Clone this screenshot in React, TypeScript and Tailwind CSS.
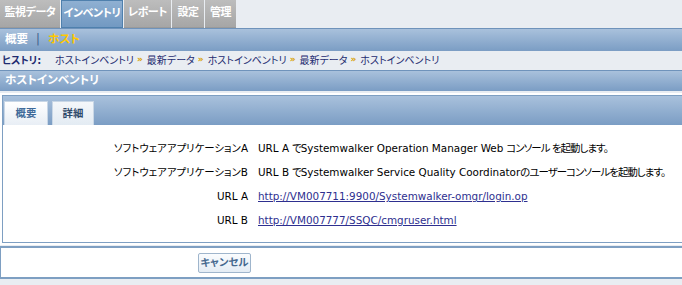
import React from "react";

const jp = "[font-family:'DejaVu_Sans','Noto_Sans_CJK_JP',sans-serif] [font-feature-settings:'palt']";

function Sep() {
  return <span className="ml-[3px] mr-[4px] text-[9px] font-bold text-[#d8a000]">»</span>;
}

function J({ children, gap }: { children: React.ReactNode; gap?: boolean }) {
  return <span className={gap ? "ml-[3px] tracking-[-0.9px]" : "tracking-[-0.9px]"}>{children}</span>;
}

export default function App() {
  const topTabs: [string, number][] = [
    ["監視データ", 60],
    ["インベントリ", 62],
    ["レポート", 47],
    ["設定", 32],
    ["管理", 31],
  ];
  return (
    <div className={`w-[682px] h-[285px] overflow-hidden bg-[#e9edf2] text-[10.4px] ${jp}`}>
      {/* top tabs */}
      <div className="flex h-[28px] items-stretch">
        {topTabs.map(([t, w], i) =>
          i === 1 ? (
            <div
              key={t}
              style={{ width: w }}
              className="flex items-center justify-center mr-[1px] border border-[#4f80ad] bg-gradient-to-b from-[#8fb0d2] to-[#7299c2] text-white font-bold text-[11px] tracking-[-0.4px]"
            >
              {t}
            </div>
          ) : (
            <div
              key={t}
              style={{ width: w }}
              className="flex items-center justify-center mr-[1px] bg-gradient-to-b from-[#bdbdbd] to-[#a6a6a6] border-b border-[#9a9a9a] text-white font-bold text-[11px] tracking-[-0.4px]"
            >
              {t}
            </div>
          )
        )}
      </div>
      {/* sub nav */}
      <div className="flex h-[23px] items-center border-t border-[#6f93bb] bg-gradient-to-b from-[#a9c1dc] to-[#7b9dc4] pl-[5px] font-bold text-[11.5px]">
        <span className="text-white">概要</span>
        <span className="mx-[8px] text-[#3d5f8c] font-normal">|</span>
        <span className="text-[#ffc800]">ホスト</span>
      </div>
      {/* history */}
      <div className="flex h-[18px] items-center pl-[2px] text-[10px] text-[#1e2c70]">
        <span className="font-bold w-[53px]">ヒストリ:</span>
        <span>ホストインベントリ</span>
        <Sep />
        <span>最新データ</span>
        <Sep />
        <span>ホストインベントリ</span>
        <Sep />
        <span>最新データ</span>
        <Sep />
        <span>ホストインベントリ</span>
      </div>
      {/* title */}
      <div className="mt-[1px] flex h-[21px] items-center border-t border-[#6f93bb] bg-gradient-to-b from-[#a9c1dc] to-[#7b9dc4] pl-[5px] font-bold text-white text-[11.5px]">
        ホストインベントリ
      </div>
      {/* panel */}
      <div className="mt-[2px] border-2 border-white border-r-0">
        <div className="border border-[#7e9fc2] border-r-0 bg-white">
          <div className="flex h-[29px] items-end gap-[4px] bg-gradient-to-b from-[#a9c1dc] to-[#7b9dc4] pl-[1px]">
            <div className="flex h-[24px] w-[44px] items-center justify-center border border-b-0 border-[#c9d7e6] bg-gradient-to-b from-white to-[#e8eef5] font-bold text-[#3f6a99]">
              概要
            </div>
            <div className="flex h-[24px] w-[42px] items-center justify-center border border-b-0 border-[#c9d7e6] bg-gradient-to-b from-[#f4f7fa] to-[#e3ebf3] font-bold text-[#2f4a6a]">
              詳細
            </div>
          </div>
          <div className="grid grid-cols-[245px_1fr] gap-x-[10px] pt-[12px] pb-[9px] text-black">
            {[
              ["ソフトウェアアプリケーションA", <>URL A<J gap>で</J>Systemwalker Operation Manager Web<J gap>コンソール を起動します。</J></>],
              ["ソフトウェアアプリケーションB", <>URL B<J gap>で</J>Systemwalker Service Quality Coordinator<J>のユーザーコンソールを起動します。</J></>],
              ["URL A", <a className="text-[#2e2f8f] underline">http://VM007711:9900/Systemwalker-omgr/login.op</a>],
              ["URL B", <a className="text-[#2e2f8f] underline">http://VM007777/SSQC/cmgruser.html</a>],
            ].map(([l, v], i) => (
              <React.Fragment key={i}>
                <div className="h-[24px] flex items-center justify-end whitespace-nowrap">{l}</div>
                <div className="h-[24px] flex items-center whitespace-pre">{v}</div>
              </React.Fragment>
            ))}
          </div>
        </div>
      </div>
      {/* buttons */}
      <div className="mt-[1px] flex h-[33px] items-center border-y-2 border-l border-[#7e9fc2] bg-white pl-[197px]">
        <button className="h-[20px] w-[53px] rounded-[2px] border border-[#9fb5cc] bg-gradient-to-b from-[#fafcfe] to-[#e4ecf4] font-bold text-[#46698f]">
          キャンセル
        </button>
      </div>
    </div>
  );
}
